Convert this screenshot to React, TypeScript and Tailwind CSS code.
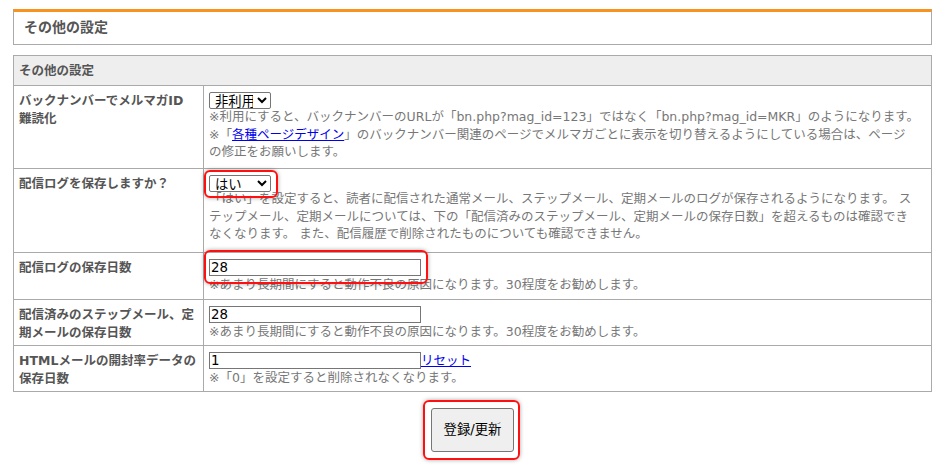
import type { ReactNode } from "react";

const font = "[font-family:'DejaVu_Sans','Noto_Sans_CJK_JP',sans-serif]";

function Mark({ children, box }: { children: ReactNode; box: string }) {
    return (
        <div className="relative w-fit">
            {children}
            <span className={"pointer-events-none absolute rounded-[6px] border-2 border-[#ff1010] shadow-[0_0_4px_rgba(0,0,0,0.35)] " + box} />
        </div>
    );
}

function Select({ value }: { value: string }) {
    return (
        <select
            defaultValue={value}
            className="block w-[62px] h-[17px] border border-[#767676] rounded-[2px] bg-white text-black text-[13.33px] leading-[15px] px-[1px]"
        >
            <option>{value}</option>
        </select>
    );
}

function Field({ value }: { value: string }) {
    return (
        <input
            defaultValue={value}
            className="block w-[212px] h-[17px] border border-[#767676] bg-white text-black text-[13.33px] leading-[15px] px-[1px]"
        />
    );
}

const label = "w-[190px] border border-[#aaa] align-top px-[5px] pt-[6px] font-bold text-[#555]";
const cell = "border border-[#aaa] align-top px-[5px] pt-[6px] text-[#777]";

export default function App() {
    return (
        <div className={"min-h-[467px] bg-white pt-[9px] pl-[13px] text-[12.5px] leading-[17.5px] " + font}>
            <div className="w-[919px] h-[36px] border-t-[3px] border-t-[#f7931e] border-x border-b border-[#aaa] flex items-center pl-[10px]">
                <h2 className="text-[14px] font-bold text-[#555]">その他の設定</h2>
            </div>

            <table className="mt-[10px] w-[919px] border-collapse">
                <thead>
                    <tr>
                        <th colSpan={2} className="h-[30px] border border-[#aaa] bg-[#eee] text-left px-[5px] font-bold text-[#555]">
                            その他の設定
                        </th>
                    </tr>
                </thead>
                <tbody>
                    <tr className="h-[83px]">
                        <td className={label}>バックナンバーでメルマガID<br />難読化</td>
                        <td className={cell}>
                            <Select value="非利用" />
                            <div className="-mt-[1px]">
                                ※利用にすると、バックナンバーのURLが「bn.php?mag_id=123」ではなく「bn.php?mag_id=MKR」のようになります。<br />
                                ※「<a href="#" className="text-[#0000ee] underline">各種ページデザイン</a>」のバックナンバー関連のページでメルマガごとに表示を切り替えるようにしている場合は、ページ<br />
                                の修正をお願いします。
                            </div>
                        </td>
                    </tr>
                    <tr className="h-[84px]">
                        <td className={label}>配信ログを保存しますか？</td>
                        <td className={cell}>
                            <Mark box="-left-[5px] -right-[7px] -top-[5px] -bottom-[6px]">
                                <Select value="はい" />
                            </Mark>
                            <div className="-mt-[2px]">
                                「はい」を設定すると、読者に配信された通常メール、ステップメール、定期メールのログが保存されるようになります。 ス<br />
                                テップメール、定期メールについては、下の「配信済みのステップメール、定期メールの保存日数」を超えるものは確認でき<br />
                                なくなります。 また、配信履歴で削除されたものについても確認できません。
                            </div>
                        </td>
                    </tr>
                    <tr className="h-[47px]">
                        <td className={label}>配信ログの保存日数</td>
                        <td className={cell}>
                            <Mark box="-left-[5px] -right-[7px] -top-[9px] -bottom-[8px]">
                                <Field value="28" />
                            </Mark>
                            ※あまり長期間にすると動作不良の原因になります。30程度をお勧めします。
                        </td>
                    </tr>
                    <tr className="h-[46px]">
                        <td className={label}>配信済みのステップメール、定<br />期メールの保存日数</td>
                        <td className={cell}>
                            <Field value="28" />
                            ※あまり長期間にすると動作不良の原因になります。30程度をお勧めします。
                        </td>
                    </tr>
                    <tr className="h-[46px]">
                        <td className={label}>HTMLメールの開封率データの<br />保存日数</td>
                        <td className={cell}>
                            <div className="flex items-end">
                                <Field value="1" />
                                <a href="#" className="text-[#0000ee] underline leading-[16px]">リセット</a>
                            </div>
                            ※「0」を設定すると削除されなくなります。
                        </td>
                    </tr>
                </tbody>
            </table>

            <div className="w-[919px] flex justify-center pt-[16px]">
                <Mark box="-left-[8px] -right-[6px] -top-[8px] -bottom-[8px]">
                    <button className="w-[83px] h-[44px] border border-[#767676] rounded-[3px] bg-[#efefef] text-black text-[13.33px]">
                        登録/更新
                    </button>
                </Mark>
            </div>
        </div>
    );
}
